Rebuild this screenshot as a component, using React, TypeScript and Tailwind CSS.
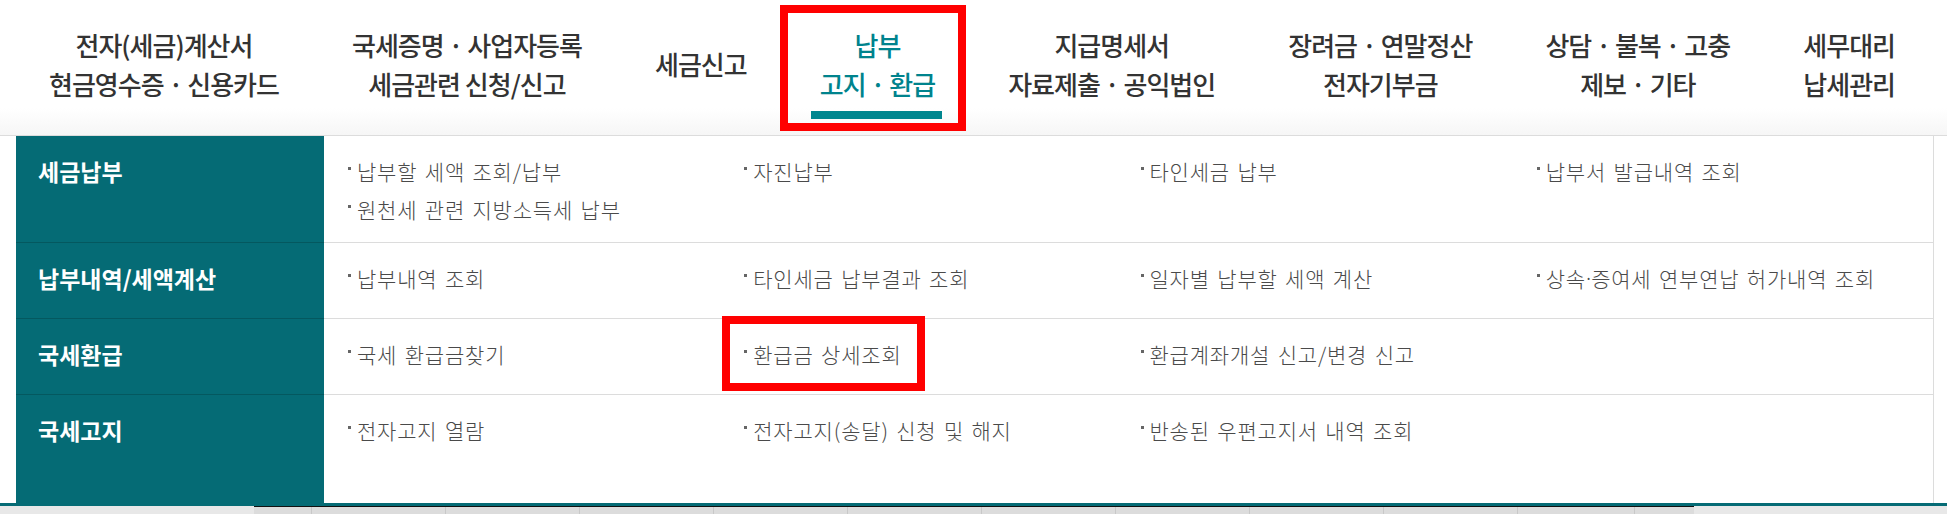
import React from "react";

const navItems: { lines: string[]; active?: boolean }[] = [
  { lines: ["전자(세금)계산서", "현금영수증 · 신용카드"] },
  { lines: ["국세증명 · 사업자등록", "세금관련 신청/신고"] },
  { lines: ["세금신고"] },
  { lines: ["납부", "고지 · 환급"], active: true },
  { lines: ["지급명세서", "자료제출 · 공익법인"] },
  { lines: ["장려금 · 연말정산", "전자기부금"] },
  { lines: ["상담 · 불복 · 고충", "제보 · 기타"] },
  { lines: ["세무대리", "납세관리"] },
];

const rows: { title: string; items: string[] }[] = [
  {
    title: "세금납부",
    items: ["납부할 세액 조회/납부", "자진납부", "타인세금 납부", "납부서 발급내역 조회", "원천세 관련 지방소득세 납부"],
  },
  {
    title: "납부내역/세액계산",
    items: ["납부내역 조회", "타인세금 납부결과 조회", "일자별 납부할 세액 계산", "상속·증여세 연부연납 허가내역 조회"],
  },
  { title: "국세환급", items: ["국세 환급금찾기", "환급금 상세조회", "환급계좌개설 신고/변경 신고"] },
  { title: "국세고지", items: ["전자고지 열람", "전자고지(송달) 신청 및 해지", "반송된 우편고지서 내역 조회"] },
];

// 가운뎃점은 CJK 폰트에서 전각으로 나와서 좁은 라틴 폰트로 따로 찍는다
function ItemText({ text }: { text: string }) {
  const parts = text.split("·");
  return (
    <>
      {parts.map((p, i) => (
        <React.Fragment key={i}>
          {i > 0 && <span className="font-['Noto_Sans',sans-serif] tracking-normal">·</span>}
          {p}
        </React.Fragment>
      ))}
    </>
  );
}

export default function App() {
  return (
    <div className="w-[1947px] h-[514px] overflow-hidden bg-white font-['Noto_Sans_CJK_KR','Noto_Sans',sans-serif]">
      {/* 상단 메뉴 */}
      <nav className="h-[136px] border-b border-[#dcdcdc] bg-linear-to-b from-white from-[80%] to-[#f6f6f6] flex items-center justify-between pl-[49px] pr-[52px] pb-[8px]">
        {navItems.map((item, i) => (
          <div
            key={i}
            className={`relative text-center text-[26px] leading-[39px] tracking-[-1px] font-medium ${
              item.active ? "text-[#00838d]" : "text-[#333333]"
            }`}
          >
            {item.lines.map((l, j) => (
              <div key={j} className="whitespace-nowrap">
                {l}
              </div>
            ))}
            {item.active && (
              <>
                <span className="absolute -left-[9px] -right-[7px] top-[86px] h-[8px] bg-[#00868f]" />
                <span className="absolute -left-[40px] -right-[31px] -top-[20px] h-[126px] border-[8px] border-[#ff0000]" />
              </>
            )}
          </div>
        ))}
      </nav>

      {/* 서브메뉴 */}
      <div className="h-[367px] pl-[16px] pr-[13px]">
        <div className="h-full flex flex-col border-r border-[#dcdcdc]">
          {rows.map((row, i) => {
            const last = i === rows.length - 1;
            return (
              <div key={row.title} className="flex min-h-[76px]">
                <div
                  className={`w-[308px] shrink-0 bg-[#056b75] pl-[22px] pt-[16px] text-[23px] leading-[38px] font-bold text-white ${
                    last ? "" : "border-b border-[#04585f]"
                  }`}
                >
                  {row.title}
                </div>
                <div
                  className={`flex-1 grid grid-cols-4 content-start pl-[24px] pt-[16px] pb-[14px] ${
                    last ? "" : "border-b border-[#dcdcdc]"
                  }`}
                >
                  {row.items.map((it) => (
                    <div
                      key={it}
                      className="relative flex items-center text-[21px] leading-[38px] tracking-[0.8px] [word-spacing:2px] font-light text-[#4a4a4a] whitespace-nowrap"
                    >
                      <span className="w-[3px] h-[3px] shrink-0 bg-[#666666] mr-[6px] -mt-[6px]" />
                      <ItemText text={it} />
                      {it === "환급금 상세조회" && (
                        <span className="absolute -left-[22px] -top-[19px] w-[203px] h-[75px] border-[8px] border-[#ff0000]" />
                      )}
                    </div>
                  ))}
                </div>
              </div>
            );
          })}
          <div className="flex-1 flex">
            <div className="w-[308px] shrink-0 bg-[#056b75]" />
            <div className="flex-1" />
          </div>
        </div>
      </div>

      <div className="h-[3px] bg-[#056b75]" />
      <div className="h-[8px] bg-[#e8e8e8] flex">
        <div className="w-[254px] shrink-0" />
        <div className="flex border-t border-[#111111] bg-[#dcdcdc]">
          <div className="w-[58px] border-r border-[#c8c8c8]" />
          {Array.from({ length: 9 }).map((_, i) => (
            <div key={i} className="w-[134px] border-r border-[#c8c8c8]" />
          ))}
          <div className="w-[117px] border-r border-[#c8c8c8]" />
          <div className="w-[59px]" />
        </div>
      </div>
    </div>
  );
}
